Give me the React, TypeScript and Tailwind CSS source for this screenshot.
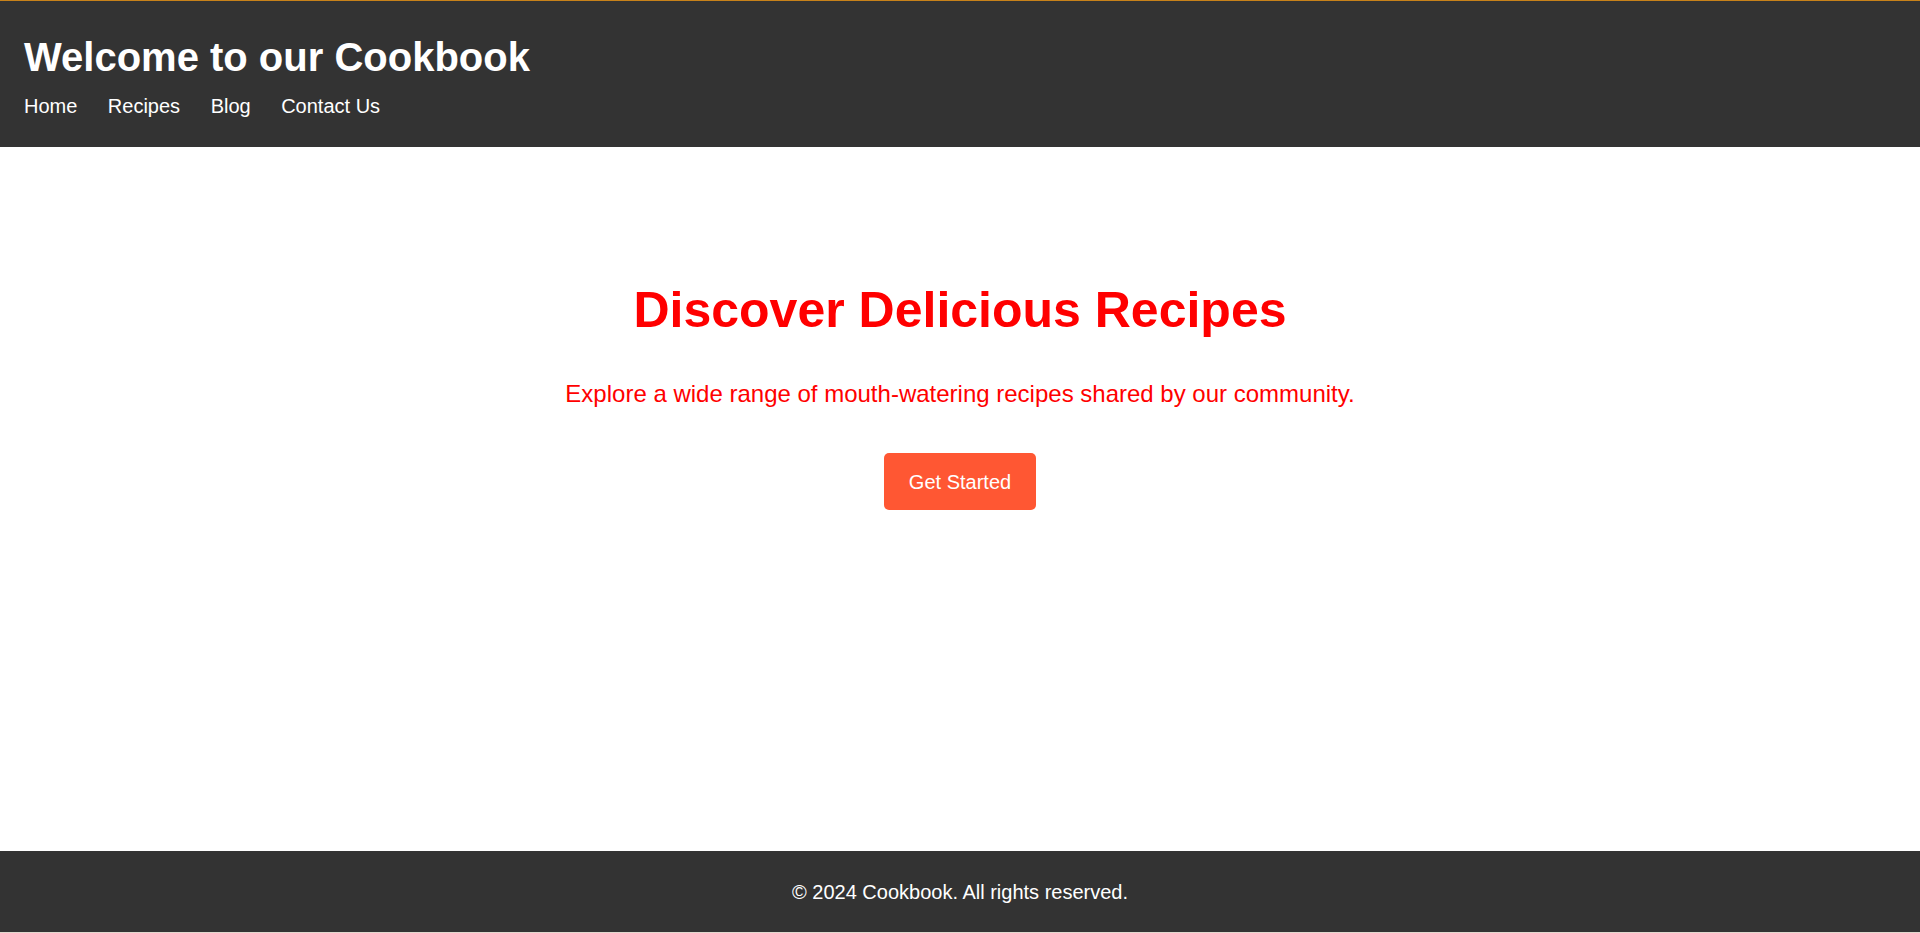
const navItems = ["Home", "Recipes", "Blog", "Contact Us"];

export default function App() {
  return (
    <div
      className="flex flex-col h-[933px] bg-white"
      style={{ fontFamily: '"Liberation Sans", Arial, sans-serif' }}
    >
      <header className="bg-[#333333] border-t border-[#c8821a] px-6 pt-[33px] pb-[29px] text-white">
        <h1 className="text-[40px] leading-[46px] font-bold">Welcome to our Cookbook</h1>
        <nav className="mt-[15px]">
          <ul className="flex gap-[30.5px] text-[20px] leading-[23px]">
            {navItems.map((item) => (
              <li key={item}>
                <a href="#">{item}</a>
              </li>
            ))}
          </ul>
        </nav>
      </header>

      <main className="flex-1 flex flex-col items-center pt-[135px] text-center">
        <h2 className="text-[50px] leading-[57px] font-bold text-[#ff0000]">
          Discover Delicious Recipes
        </h2>
        <p className="mt-[41px] text-[24px] leading-[28px] text-[#ff0000]">
          Explore a wide range of mouth-watering recipes shared by our community.
        </p>
        <a
          href="#"
          className="mt-[45px] flex items-center justify-center h-[57px] px-[25px] rounded-[5px] bg-[#ff5733] text-white text-[20px]"
        >
          Get Started
        </a>
      </main>

      <footer className="bg-[#333333] pt-[30px] pb-[28px] text-center text-white text-[20px] leading-[23px]">
        <p>© 2024 Cookbook. All rights reserved.</p>
      </footer>
      <div className="h-px bg-[#e2d8ce]" />
    </div>
  );
}
